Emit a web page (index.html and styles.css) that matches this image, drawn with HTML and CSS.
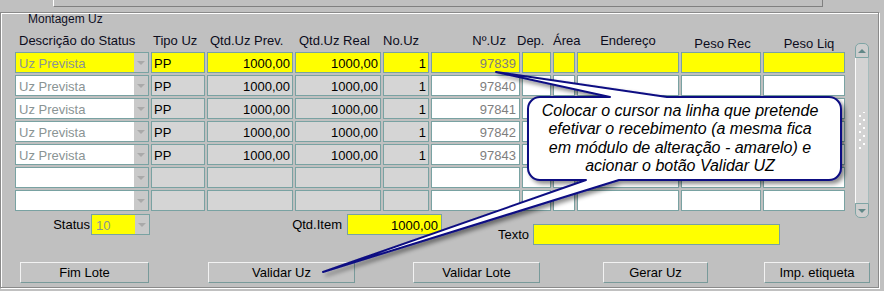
FILE: index.html
```html
<!DOCTYPE html>
<html lang="pt">
<head>
<meta charset="utf-8">
<title>Montagem Uz</title>
<link rel="stylesheet" href="styles.css">
</head>
<body>
<div class="topstrip"></div>
<div class="frame">
  <div class="title">Montagem Uz</div>
  <div class="main">
    <div class="table">
      <div class="heads">
        <div class="h h1">Descrição do Status</div>
        <div class="h h2">Tipo Uz</div>
        <div class="h h3">Qtd.Uz Prev.</div>
        <div class="h h4">Qtd.Uz Real</div>
        <div class="h h5">No.Uz</div>
        <div class="h h6">Nº.Uz</div>
        <div class="h h7">Dep.</div>
        <div class="h h8">Área</div>
        <div class="h h9">Endereço</div>
        <div class="h h10">Peso Rec</div>
        <div class="h h11">Peso Liq</div>
      </div>
      <div class="rows">
        <!-- row 1 (current) -->
        <div class="f combo y"><span class="dim">Uz Prevista</span><i class="dd"></i></div>
        <div class="f y">PP</div>
        <div class="f y r">1000,00</div>
        <div class="f y r">1000,00</div>
        <div class="f y r">1</div>
        <div class="f y r num">97839</div>
        <div class="f y"></div>
        <div class="f y"></div>
        <div class="f y"></div>
        <div class="f y"></div>
        <div class="f y"></div>
        <!-- row 2 -->
        <div class="f combo w"><span class="dim">Uz Prevista</span><i class="dd"></i></div>
        <div class="f g">PP</div>
        <div class="f g r">1000,00</div>
        <div class="f g r">1000,00</div>
        <div class="f g r">1</div>
        <div class="f w r num">97840</div>
        <div class="f w"></div>
        <div class="f w"></div>
        <div class="f w"></div>
        <div class="f w"></div>
        <div class="f w"></div>
        <!-- row 3 -->
        <div class="f combo w"><span class="dim">Uz Prevista</span><i class="dd"></i></div>
        <div class="f g">PP</div>
        <div class="f g r">1000,00</div>
        <div class="f g r">1000,00</div>
        <div class="f g r">1</div>
        <div class="f w r num">97841</div>
        <div class="f w"></div>
        <div class="f w"></div>
        <div class="f w"></div>
        <div class="f w"></div>
        <div class="f w"></div>
        <!-- row 4 -->
        <div class="f combo w"><span class="dim">Uz Prevista</span><i class="dd"></i></div>
        <div class="f g">PP</div>
        <div class="f g r">1000,00</div>
        <div class="f g r">1000,00</div>
        <div class="f g r">1</div>
        <div class="f w r num">97842</div>
        <div class="f w"></div>
        <div class="f w"></div>
        <div class="f w"></div>
        <div class="f w"></div>
        <div class="f w"></div>
        <!-- row 5 -->
        <div class="f combo w"><span class="dim">Uz Prevista</span><i class="dd"></i></div>
        <div class="f g">PP</div>
        <div class="f g r">1000,00</div>
        <div class="f g r">1000,00</div>
        <div class="f g r">1</div>
        <div class="f w r num">97843</div>
        <div class="f w"></div>
        <div class="f w"></div>
        <div class="f w"></div>
        <div class="f w"></div>
        <div class="f w"></div>
        <!-- row 6 -->
        <div class="f combo w"><span></span><i class="dd"></i></div>
        <div class="f g"></div>
        <div class="f g"></div>
        <div class="f g"></div>
        <div class="f g"></div>
        <div class="f w"></div>
        <div class="f w"></div>
        <div class="f w"></div>
        <div class="f w"></div>
        <div class="f w"></div>
        <div class="f w"></div>
        <!-- row 7 -->
        <div class="f combo w"><span></span><i class="dd"></i></div>
        <div class="f g"></div>
        <div class="f g"></div>
        <div class="f g"></div>
        <div class="f g"></div>
        <div class="f w"></div>
        <div class="f w"></div>
        <div class="f w"></div>
        <div class="f w"></div>
        <div class="f w"></div>
        <div class="f w"></div>
      </div>
    </div>
    <div class="sb">
      <div class="sb-btn up"><i></i></div>
      <div class="sb-track"><div class="grip"></div></div>
      <div class="sb-btn down"><i></i></div>
    </div>
  </div>
  <div class="bottom">
    <div class="lbl l-status">Status</div>
    <div class="f combo y sfield"><span class="dim">10</span><i class="dd"></i></div>
    <div class="lbl l-qtd">Qtd.Item</div>
    <div class="f y r qfield">1000,00</div>
    <div class="lbl l-texto">Texto</div>
    <div class="f y tfield"></div>
  </div>
  <div class="buttons">
    <button class="btn b1">Fim Lote</button>
    <button class="btn b2">Validar Uz</button>
    <button class="btn b3">Validar Lote</button>
    <button class="btn b4">Gerar Uz</button>
    <button class="btn b5">Imp. etiqueta</button>
  </div>
</div>

<svg class="callout-shape" width="884" height="291" viewBox="0 0 884 291" aria-hidden="true">
  <defs>
    <filter id="sh" x="-10%" y="-10%" width="130%" height="140%">
      <feDropShadow dx="3" dy="3" stdDeviation="2" flood-color="#000" flood-opacity="0.45"/>
    </filter>
  </defs>
  <path filter="url(#sh)" d="M540 97 L610 97 L496 72 L667 97 L829 97 A12 12 0 0 1 841 109 L841 168 A12 12 0 0 1 829 180 L619 180 L323 272 L586 180 L540 180 A12 12 0 0 1 528 168 L528 109 A12 12 0 0 1 540 97 Z" fill="#fff" stroke="#0b0b82" stroke-width="2" stroke-linejoin="round"/>
</svg>
<div class="callout-text">Colocar o cursor na linha que pretende<br>efetivar o recebimento (a mesma fica<br>em módulo de alteração - amarelo) e<br>acionar o botão Validar UZ</div>
</body>
</html>
```

FILE: styles.css
```css
* { box-sizing: border-box; }
html, body { margin: 0; padding: 0; }
body {
  width: 884px;
  height: 291px;
  overflow: hidden;
  position: relative;
  background: #c0c0c0;
  font-family: "Liberation Sans", Arial, sans-serif;
  font-size: 13px;
  color: #000;
}

.topstrip {
  margin-left: 53px;
  width: 770px;
  height: 7px;
  border-left: 1px solid #fff;
  border-right: 1px solid #808080;
  border-bottom: 1px solid #808080;
}

.frame {
  margin-top: 5px;
  width: 879px;
  height: 276px;
  border: 1px solid #8a8a8a;
  box-shadow: 1px 1px 0 #fff, inset 1px 1px 0 #fff;
  display: flex;
  flex-direction: column;
}

.title {
  height: 12px;
  line-height: 12px;
  font-size: 12px;
  padding-left: 27px;
  color: #101024;
}

.main {
  display: flex;
  margin-top: 8px;
  padding-left: 14px;
}

.table { width: 830px; }

.heads, .rows {
  display: grid;
  grid-template-columns: 134px 54px 86px 86px 46px 89px 29px 22px 102px 80px 82px;
  column-gap: 2px;
}

.heads { height: 15px; }
.h { line-height: 15px; white-space: nowrap; color: #0c0c1c; }
.h1 { padding-left: 4px; }
.h2 { padding-left: 2px; }
.h3 { padding-left: 3px; }
.h4 { padding-left: 4px; }
.h5 { padding-left: 0; }
.h6 { text-align: right; padding-right: 14px; }
.h7 { margin-left: -5px; }
.h9 { text-align: center; }
.h10 { text-align: center; padding-top: 3px; padding-left: 3px; }
.h11 { text-align: center; padding-top: 3px; padding-left: 10px; }

.rows {
  margin-top: 4px;
  grid-auto-rows: 21px;
  row-gap: 2px;
}

.f {
  height: 21px;
  border: 1px solid #79a2a2;
  line-height: 21px;
  padding: 0 2px;
  white-space: nowrap;
  overflow: hidden;
}
.y { background: #ffff00; }
.g { background: #d5d5d5; }
.w { background: #fff; }
.r { text-align: right; }
.num { color: #7e7e7e; padding-right: 3px; }
.dim { color: #8a9494; }

.combo { display: flex; padding: 0; }
.combo span { flex: 1; padding-left: 3px; }
.dd {
  width: 14px;
  background: #c9c9c9;
  display: flex;
  align-items: center;
  justify-content: center;
}
.dd::after {
  content: "";
  border-left: 4px solid transparent;
  border-right: 4px solid transparent;
  border-top: 4px solid #a9a9a9;
}

/* scrollbar */
.sb {
  width: 14px;
  height: 175px;
  margin-left: 10px;
  margin-top: 10px;
  margin-bottom: -7px;
  display: flex;
  flex-direction: column;
}
.sb-btn {
  height: 15px;
  border: 1px solid #7fa5a5;
  background: #cecece;
  display: flex;
  align-items: center;
  justify-content: center;
}
.up { border-radius: 5px 5px 0 0; }
.down { border-radius: 0 0 5px 5px; }
.sb-btn i { display: block; border-left: 4px solid transparent; border-right: 4px solid transparent; }
.up i { border-bottom: 4px solid #628888; }
.down i { border-top: 4px solid #628888; }
.sb-track {
  flex: 1;
  background: #d3d3d3;
  border-left: 1px solid #fbfbfb;
  border-right: 1px solid #a6bcbc;
  display: flex;
  align-items: center;
  justify-content: center;
}
.grip {
  width: 8px;
  height: 38px;
  background-image:
    radial-gradient(circle, #fff 0.9px, rgba(255,255,255,0) 1.4px),
    radial-gradient(circle, #fff 0.9px, rgba(255,255,255,0) 1.4px);
  background-size: 8px 8px;
  background-position: -2px 0, 2px 4px;
}

/* bottom fields */
.bottom {
  display: flex;
  align-items: flex-start;
  margin-top: 3px;
  height: 31px;
}
.lbl {
  line-height: 21px;
  text-align: right;
  white-space: nowrap;
}
.l-status { width: 90px; padding-right: 1px; }
.sfield { width: 59px; }
.sfield span { padding-left: 4px; }
.l-qtd { width: 197px; padding-right: 5px; }
.qfield { width: 95px; padding-right: 3px; }
.l-texto { width: 91px; padding-right: 4px; margin-top: 10px; }
.tfield { width: 247px; margin-top: 10px; }

/* buttons */
.buttons {
  display: flex;
  margin-top: 17px;
  padding-left: 19px;
}
.btn {
  appearance: none;
  margin: 0;
  padding: 0;
  height: 21px;
  font: inherit;
  color: #000;
  line-height: 19px;
  text-align: center;
  background: #c3c3c3;
  border: 1px solid;
  border-color: #f2f2f2 #789a9a #789a9a #f2f2f2;
}
.b1 { width: 129px; }
.b2 { width: 147px; margin-left: 59px; }
.b3 { width: 127px; margin-left: 58px; }
.b4 { width: 105px; margin-left: 63px; }
.b5 { width: 106px; margin-left: 56px; }

/* callout overlay */
.callout-shape {
  position: absolute;
  left: 0;
  top: 0;
  pointer-events: none;
}
.callout-text {
  position: absolute;
  left: 529px;
  top: 98px;
  width: 311px;
  height: 81px;
  padding-top: 3.5px;
  padding-right: 9px;
  text-align: center;
  font-style: italic;
  font-size: 16px;
  line-height: 18.6px;
  color: #000;
  white-space: nowrap;
}
```
